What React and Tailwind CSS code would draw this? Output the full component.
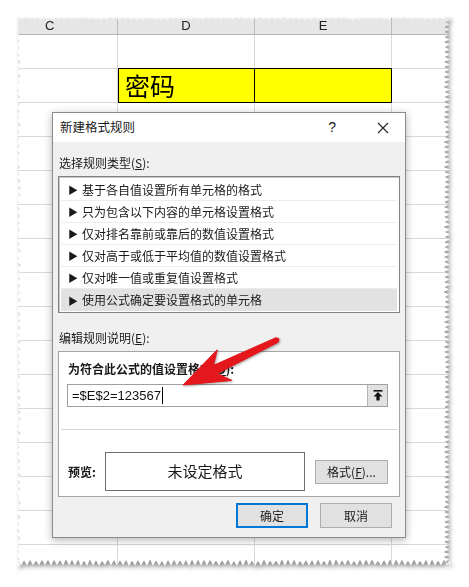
import { useMemo } from 'react';

const RULES = [
  '基于各自值设置所有单元格的格式',
  '只为包含以下内容的单元格设置格式',
  '仅对排名靠前或靠后的数值设置格式',
  '仅对高于或低于平均值的数值设置格式',
  '仅对唯一值或重复值设置格式',
  '使用公式确定要设置格式的单元格',
];

const SHEET_W = 433;
const SHEET_H = 549;

// jagged "torn paper" outline, computed once
function tornClip(w, h) {
  let seed = 11;
  const rnd = () => { seed = (seed * 9301 + 49297) % 233280; return seed / 233280; };
  const pts = [];
  for (let x = 0; x < w; x += 6) { pts.push([x, 2 + rnd() * 2]); pts.push([x + 3, rnd()]); }
  for (let y = 0; y < h; y += 5) { pts.push([w - 5 - rnd() * 1.5, y]); pts.push([w - rnd(), y + 2.5]); }
  for (let x = w; x > 0; x -= 6) { pts.push([x, h - 5 - rnd() * 1.5]); pts.push([x - 3, h - rnd()]); }
  for (let y = h; y > 0; y -= 7) { pts.push([2 + rnd() * 2, y]); pts.push([rnd(), y - 3.5]); }
  return `polygon(${pts.map(([x, y]) => `${x.toFixed(1)}px ${y.toFixed(1)}px`).join(',')})`;
}

function Arrow() {
  // page coordinates, tip near the formula box
  const pts = '183,385 217.2,349.8 213.6,365.3 275.9,337.7 278.1,342.3 217.4,373.5 231.8,380.4';
  return (
    <svg className="absolute left-0 top-0 pointer-events-none drop-shadow-[1px_1px_1px_rgba(0,0,0,0.35)]" width="469" height="587">
      <polygon points={pts} fill="#e3171c" strokeLinejoin="round" stroke="#e3171c" strokeWidth="1" />
      <circle cx="277" cy="340" r="2.4" fill="#e3171c" />
    </svg>
  );
}

function Dialog() {
  return (
    <div className="absolute left-[35px] top-[95px] w-[354px] h-[426px] border border-[#8c8c8c] bg-[#f0f0f0] flex flex-col shadow-[0_2px_8px_rgba(0,0,0,0.3)] text-[12px] text-[#1a1a1a] font-['Noto_Sans_CJK_SC',sans-serif]">
      <div className="h-[29px] bg-white flex items-center pl-[7px] shrink-0">
        <span className="text-[12.5px]">新建格式规则</span>
        <span className="ml-auto mr-[41px] text-[14px] font-['Liberation_Sans',sans-serif]">?</span>
        <svg className="mr-[16px]" width="12" height="12" viewBox="0 0 12 12">
          <path d="M1 1L11 11M11 1L1 11" stroke="#222" strokeWidth="1.1" />
        </svg>
      </div>

      <div className="flex flex-col px-[5px] pt-[13px]">
        <div className="h-[16px] leading-[16px] pl-[1px]">选择规则类型(<span className="underline">S</span>):</div>

        <div className="mt-[5px] h-[137px] border border-[#828282] bg-white pt-[2px] pb-[1px] px-[2px] shadow-[inset_1px_1px_0_#c8c8c8]">
          {RULES.map((r, i) => (
            <div key={i}
              className={`h-[22px] flex items-center pl-[7px] ${i === RULES.length - 1 ? 'bg-[#e2e2e2]' : 'border-b border-[#ececec]'}`}>
              <span className="text-[10px] w-[14px]">▶</span>
              <span>{r}</span>
            </div>
          ))}
        </div>

        <div className="mt-[17px] h-[16px] leading-[16px] pl-[1px]">编辑规则说明(<span className="underline">E</span>):</div>

        <div className="mt-[5px] h-[146px] border border-[#a5a5a5] bg-white flex flex-col">
          <div className="mt-[9px] pl-[9px] h-[16px] leading-[16px] font-bold">为符合此公式的值设置格式(<span className="underline">O</span>):</div>
          <div className="mt-[7px] ml-[8px] mr-[11px] h-[23px] border border-[#a0a0a0] flex">
            <div className="flex-1 flex items-center pl-[4px] text-[13px] font-['Liberation_Sans',sans-serif] text-[#111]">
              =$E$2=123567<span className="w-px h-[17px] bg-black ml-[1px]" />
            </div>
            <div className="w-[20px] bg-[#e1e1e1] border-l border-[#b5b5b5] flex items-center justify-center">
              <svg width="10" height="11" viewBox="0 0 10 11">
                <rect x="0.5" y="0" width="9" height="1.6" fill="#111" />
                <path d="M5 2L9.5 6.5H6.6V10.5H3.4V6.5H0.5Z" fill="#111" />
              </svg>
            </div>
          </div>
          <div className="mt-[22px] mx-[2px] h-px bg-[#d6d6d6]" />
          <div className="mt-[22px] flex items-center">
            <span className="pl-[9px] w-[46px] font-bold">预览:</span>
            <div className="w-[200px] h-[39px] border border-[#6e6e6e] flex items-center justify-center text-[15px]">未设定格式</div>
            <div className="ml-[10px] w-[73px] h-[24px] border border-[#adadad] bg-[#e1e1e1] flex items-center justify-center">
              格式(<span className="underline">F</span>)...
            </div>
          </div>
        </div>

        <div className="mt-[6px] flex justify-end gap-[12px] mr-[8px]">
          <div className="w-[72px] h-[25px] border-2 border-[#0078d7] bg-[#e1e1e1] flex items-center justify-center">确定</div>
          <div className="w-[72px] h-[25px] border border-[#adadad] bg-[#e1e1e1] flex items-center justify-center">取消</div>
        </div>
      </div>
    </div>
  );
}

function Sheet() {
  const clip = useMemo(() => tornClip(SHEET_W, SHEET_H), []);
  const rows = Array.from({ length: 16 }, (_, i) => i);
  return (
    <div className="relative bg-white overflow-hidden" style={{ width: SHEET_W, height: SHEET_H, clipPath: clip }}>
      <div className="h-[18px] flex bg-[#e6e6e6] border-b border-[#b4b4b4] text-[13px] leading-[18px] text-[#222] font-['Liberation_Sans',sans-serif]">
        <div className="w-[101px] border-r border-[#bdbdbd] pl-[28px]">C</div>
        <div className="w-[137px] border-r border-[#bdbdbd] text-center">D</div>
        <div className="w-[137px] border-r border-[#bdbdbd] text-center">E</div>
        <div className="flex-1" />
      </div>
      {rows.map((r) => (
        <div key={r} className="h-[34px] flex border-b border-[#d9d9d9]">
          <div className="w-[101px] border-r border-[#d9d9d9]" />
          {r === 1 ? (
            <>
              <div className="w-[137px] bg-[#ffff00] border border-black -mt-px h-[35px] flex items-center pl-[6px] text-[25px] text-black font-['Noto_Sans_CJK_SC',sans-serif]">密码</div>
              <div className="w-[137px] bg-[#ffff00] border border-l-0 border-black -mt-px h-[35px]" />
            </>
          ) : (
            <>
              <div className="w-[137px] border-r border-[#d9d9d9]" />
              <div className="w-[137px] border-r border-[#d9d9d9]" />
            </>
          )}
          <div className="flex-1" />
        </div>
      ))}
      <Dialog />
    </div>
  );
}

export default function App() {
  return (
    <div className="relative w-[469px] h-[587px] bg-white overflow-hidden">
      <div className="pt-[17px] pl-[17px] drop-shadow-[2px_3px_2px_rgba(0,0,0,0.45)]">
        <Sheet />
      </div>
      <Arrow />
    </div>
  );
}
